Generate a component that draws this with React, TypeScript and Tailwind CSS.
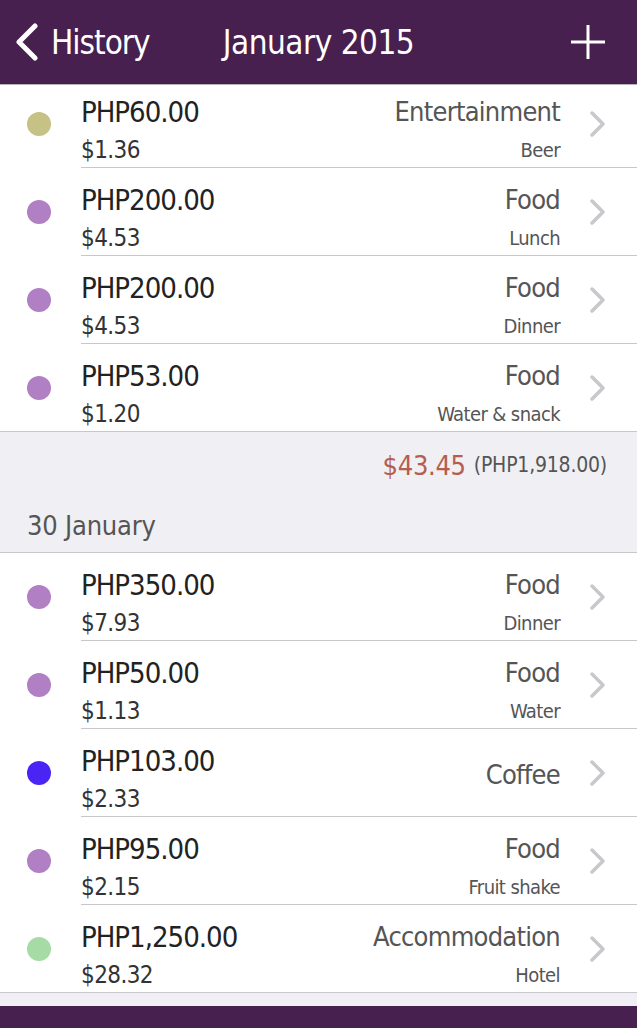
interface Entry {
	php: string;
	usd: string;
	category: string;
	note?: string;
	color: string;
}

const earlier: Entry[] = [
	{ php: "PHP60.00", usd: "$1.36", category: "Entertainment", note: "Beer", color: "#c6c184" },
	{ php: "PHP200.00", usd: "$4.53", category: "Food", note: "Lunch", color: "#b07fc4" },
	{ php: "PHP200.00", usd: "$4.53", category: "Food", note: "Dinner", color: "#b07fc4" },
	{ php: "PHP53.00", usd: "$1.20", category: "Food", note: "Water & snack", color: "#b07fc4" },
];

const jan30: Entry[] = [
	{ php: "PHP350.00", usd: "$7.93", category: "Food", note: "Dinner", color: "#b07fc4" },
	{ php: "PHP50.00", usd: "$1.13", category: "Food", note: "Water", color: "#b07fc4" },
	{ php: "PHP103.00", usd: "$2.33", category: "Coffee", color: "#4a23f5" },
	{ php: "PHP95.00", usd: "$2.15", category: "Food", note: "Fruit shake", color: "#b07fc4" },
	{ php: "PHP1,250.00", usd: "$28.32", category: "Accommodation", note: "Hotel", color: "#a6dba6" },
];

const font = { fontFamily: '"DejaVu Sans Condensed", "DejaVu Sans", "Liberation Sans", sans-serif' };

function Chevron() {
	return (
		<svg width="18" height="28" viewBox="0 0 18 28" fill="none" className="ml-[29px] mr-[30px] shrink-0">
			<path d="M3 3 L14 14 L3 25" stroke="#c7c7cc" strokeWidth="3.5" strokeLinecap="round" strokeLinejoin="round" />
		</svg>
	);
}

function Row({ entry, last }: { entry: Entry; last: boolean }) {
	return (
		<div className="flex h-[88px] bg-white">
			<div className="flex w-[81px] shrink-0 items-center">
				<span className="ml-[27px] h-6 w-6 rounded-full" style={{ backgroundColor: entry.color }} />
			</div>
			<div className={`flex flex-1 items-center border-b border-[#c8c7cc] ${last ? "-ml-[81px] pl-[81px]" : ""}`}>
				<div className="mt-[16px] flex flex-1 flex-col">
					<span className="text-[29px] leading-[36px] tracking-[-1px] text-[#222]">{entry.php}</span>
					<span className="text-[24px] leading-[40px] tracking-[-0.6px] text-[#333]">{entry.usd}</span>
				</div>
				<div className={`flex flex-col items-end ${entry.note ? "mt-[16px]" : "mt-[4px]"}`}>
					<span className="text-[27px] leading-[36px] tracking-[-0.75px] text-[#555]">{entry.category}</span>
					{entry.note && (
						<span className="text-[20px] leading-[40px] tracking-[-0.6px] text-[#555]">{entry.note}</span>
					)}
				</div>
				<Chevron />
			</div>
		</div>
	);
}

export default function App() {
	return (
		<div className="flex h-[1028px] w-[637px] flex-col overflow-hidden bg-[#efeff4]" style={font}>
			<div className="relative z-10 flex h-[85px] shrink-0 items-center border-b border-[#b9b0bc] bg-[#48204f] text-white">
				<div className="flex w-[180px] items-center pl-[13px]">
					<svg width="26" height="38" viewBox="0 0 26 38" fill="none">
						<path d="M22 3 L6 19 L22 35" stroke="white" strokeWidth="5" strokeLinecap="round" strokeLinejoin="round" />
					</svg>
					<span className="ml-[12px] text-[33px] leading-none tracking-[-1px]">History</span>
				</div>
				<span className="flex-1 text-center text-[33px] leading-none tracking-[-0.5px]">January 2015</span>
				<div className="flex w-[180px] justify-end pr-[31px]">
					<svg width="36" height="36" viewBox="0 0 36 36">
						<path d="M18 1 V35 M1 18 H35" stroke="white" strokeWidth="3" />
					</svg>
				</div>
			</div>

			<div className="-mt-[5px] flex flex-col">
				{earlier.map((e, i) => (
					<Row key={i} entry={e} last={i === earlier.length - 1} />
				))}

				<div className="flex h-[68px] items-center justify-end pr-[30px]">
					<span className="text-[27px] tracking-[-0.3px] text-[#b65d4d]">$43.45</span>
					<span className="ml-[8px] text-[21px] tracking-[-0.2px] text-[#555]">(PHP1,918.00)</span>
				</div>
				<div className="flex h-[53px] items-center border-b border-[#c8c7cc] pl-[27px]">
					<span className="text-[27px] tracking-[-0.2px] text-[#555]">30 January</span>
				</div>

				{jan30.map((e, i) => (
					<Row key={i} entry={e} last={i === jan30.length - 1} />
				))}

				<div className="h-[13px]" />
			</div>
			<div className="flex-1 bg-[#48204f]" />
		</div>
	);
}
